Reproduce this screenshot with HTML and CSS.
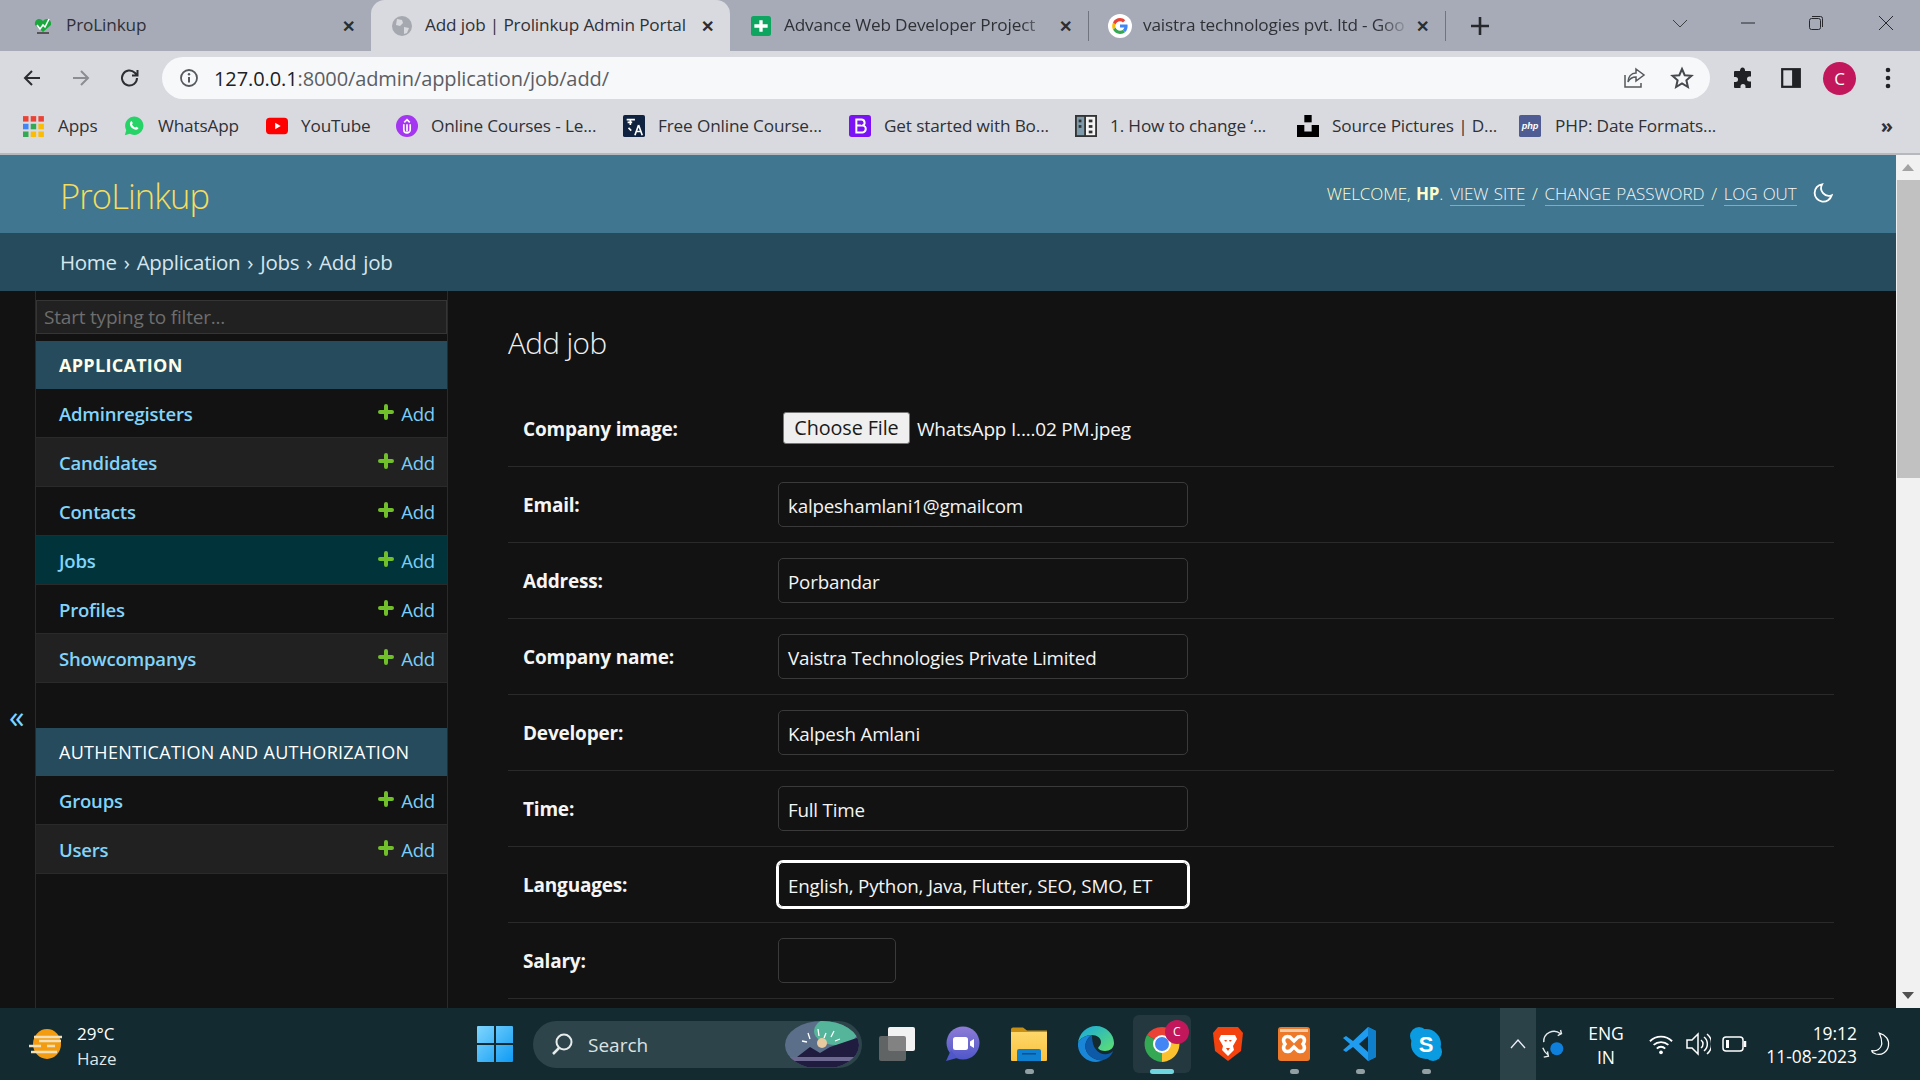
FILE: index.html
```html
<!DOCTYPE html>
<html>
<head>
<meta charset="utf-8">
<title>Add job | Prolinkup Admin Portal</title>
<link rel="stylesheet" href="styles.css">
</head>
<body>

<!-- browser chrome -->
<div class="tabstrip">
	<div class="tab">
		<svg class="fav" viewBox="0 0 20 20"><path d="M2 9 C1 3 7 1 10 5 C13 1 19 3 18 9 L10 16Z" fill="#1aa83c"/><path d="M4 9l3 4 3-4 2 2 4-8" fill="none" stroke="#fff" stroke-width="1.6"/><rect x="4" y="16" width="12" height="2" fill="#555"/></svg>
		<span class="tab-title">ProLinkup</span>
		<span class="tab-x">✕</span>
	</div>
	<div class="tab active">
		<svg class="fav" viewBox="0 0 20 20"><circle cx="10" cy="10" r="10" fill="#a5a8ae"/><path d="M5 3l5 1 1 3-3 3-4-1zM12 11l5 1-2 5-3 1z" fill="#d9dae0"/></svg>
		<span class="tab-title">Add job | Prolinkup Admin Portal</span>
		<span class="tab-x">✕</span>
	</div>
	<div class="tab sep">
		<svg class="fav" viewBox="0 0 24 24"><rect width="24" height="24" rx="3" fill="#0da560"/><path d="M10 5h4v5h6v4h-6v5h-4v-5H4v-4h6z" fill="#fff"/></svg>
		<span class="tab-title fade">Advance Web Developer Project</span>
		<span class="tab-x">✕</span>
	</div>
	<div class="tab sep">
		<svg class="fav g-fav" viewBox="0 0 24 24"><circle cx="12" cy="12" r="12" fill="#fff"/><path d="M19.6 12.2c0-.6 0-1.100-.2-1.600H12v3h4.300c-.2 1-.7 1.800-1.600 2.400l2.500 2c1.500-1.400 2.400-3.400 2.400-5.800z" fill="#4285f4"/><path d="M12 20c2.200 0 4-.7 5.200-2l-2.500-2c-.7.500-1.600.8-2.700.8-2.100 0-3.800-1.400-4.500-3.300L5 15.600C6.300 18.200 9 20 12 20z" fill="#34a853"/><path d="M7.500 13.500c-.3-1-.3-2 0-3L5 8.400c-1.100 2.200-1.100 5 0 7.200z" fill="#fbbc05"/><path d="M12 7.200c1.200 0 2.200.4 3 1.200l2.200-2.200C15.900 4.800 14.100 4 12 4 9 4 6.300 5.800 5 8.400l2.500 2.100C8.200 8.600 9.900 7.200 12 7.200z" fill="#ea4335"/></svg>
		<span class="tab-title fade">vaistra technologies pvt. ltd - Goo</span>
		<span class="tab-x">✕</span>
	</div>
	<svg class="new-tab" viewBox="0 0 20 20"><path d="M10 1v18M1 10h18" stroke="#26282c" stroke-width="2.600"/></svg>
	<div class="win-controls">
		<svg viewBox="0 0 20 20"><path d="M3 7l7 7 7-7" fill="none" stroke="#3c4043" stroke-width="1"/></svg>
		<svg viewBox="0 0 20 20"><path d="M3 10h14" stroke="#26282c" stroke-width="1"/></svg>
		<svg viewBox="0 0 20 20"><rect x="3.500" y="5.500" width="11" height="11" rx="2" fill="none" stroke="#26282c"/><path d="M6 3.500h8.500a2 2 0 0 1 2 2V14" fill="none" stroke="#26282c"/></svg>
		<svg viewBox="0 0 20 20"><path d="M3 3l14 14M17 3L3 17" stroke="#26282c" stroke-width="1"/></svg>
	</div>
</div>

<div class="toolbar">
	<svg class="tool" viewBox="0 0 24 24"><path d="M20 12H5M12 5l-7 7 7 7" fill="none" stroke="#2b2d31" stroke-width="2"/></svg>
	<svg class="tool" viewBox="0 0 24 24"><path d="M4 12h15M12 5l7 7-7 7" fill="none" stroke="#8b8d92" stroke-width="2"/></svg>
	<svg class="tool" viewBox="0 0 24 24"><path d="M19 12a7.500 7.500 0 1 1-2.200-5.300L19.500 9.500M19.500 4v5.500H14" fill="none" stroke="#2b2d31" stroke-width="2"/></svg>
	<div class="omnibox">
		<svg class="omni-info" viewBox="0 0 20 20"><circle cx="10" cy="10" r="8" fill="none" stroke="#55585c" stroke-width="1.800"/><path d="M10 9v5.500" stroke="#55585c" stroke-width="2"/><circle cx="10" cy="6.300" r="1.200" fill="#55585c"/></svg>
		<span class="url"><b>127.0.0.1</b>:8000/admin/application/job/add/</span>
		<svg class="omni-share" viewBox="0 0 24 24"><path d="M3 9v12h16v-4" fill="none" stroke="#55585c" stroke-width="1.500"/><path d="M14 3l8 6-8 6v-4c-4 0-6 1-8 5 0-5 3-9 8-9z" fill="none" stroke="#55585c" stroke-width="1.500"/></svg>
		<svg class="omni-star" viewBox="0 0 24 24"><path d="M12 3l2.700 6.200 6.800.6-5.100 4.500 1.500 6.700L12 17.500 6.100 21l1.500-6.700-5.100-4.500 6.800-.6z" fill="none" stroke="#45484c" stroke-width="2"/></svg>
	</div>
	<svg class="puzzle" viewBox="0 0 24 24"><path d="M10 2a2.500 2.500 0 0 1 4 2v1h5a1 1 0 0 1 1 1v4.500h-1.500a2.500 2.500 0 0 0 0 5H20V21a1 1 0 0 1-1 1h-4.500v-1.500a2.500 2.500 0 0 0-5 0V22H4a1 1 0 0 1-1-1v-5h1.500a2.500 2.500 0 0 0 0-5H3V6a1 1 0 0 1 1-1h5V4z" fill="#202124"/></svg>
	<svg class="panel" viewBox="0 0 20 20"><rect x="1" y="1" width="18" height="18" fill="#202124"/><rect x="3" y="3" width="8" height="14" fill="#d9dae0"/></svg>
	<div class="avatar">C</div>
	<svg class="dots" viewBox="0 0 6 24"><circle cx="3" cy="4" r="2.300" fill="#202124"/><circle cx="3" cy="12" r="2.300" fill="#202124"/><circle cx="3" cy="20" r="2.300" fill="#202124"/></svg>
</div>

<div class="bookmarks">
	<a class="bm" style="width:100px"><svg viewBox="0 0 20 20"><g id="apps"><rect x="0" y="1" width="5" height="5" fill="#ea4335"/><rect x="7" y="1" width="5" height="5" fill="#ea4335"/><rect x="14" y="1" width="5" height="5" fill="#ea4335"/><rect x="0" y="8" width="5" height="5" fill="#4285f4"/><rect x="7" y="8" width="5" height="5" fill="#34a853"/><rect x="14" y="8" width="5" height="5" fill="#fbbc05"/><rect x="0" y="15" width="5" height="5" fill="#34a853"/><rect x="7" y="15" width="5" height="5" fill="#fbbc05"/><rect x="14" y="15" width="5" height="5" fill="#fbbc05"/></g></svg>Apps</a>
	<a class="bm" style="width:143px"><svg viewBox="0 0 24 24"><path d="M2 22l1.500-5.500A10 10 0 1 1 7.500 20.500z" fill="#25d366"/><path d="M8.500 7c1-.8 1.500 0 2 1.500.3.800-.3 1.200-.7 1.700.7 1.500 2 2.800 3.500 3.500.5-.4 1-1 1.700-.7 1.500.6 2.300 1 1.500 2-1 1.500-3 1.500-5.500 0S7.500 11.500 7.500 9.500c0-1.200.4-2 1-2.500z" fill="#fff"/></svg>WhatsApp</a>
	<a class="bm" style="width:130px"><svg viewBox="0 0 24 24"><rect x="0" y="3" width="24" height="18" rx="4" fill="#f00"/><path d="M10 8.500l6 3.500-6 3.500z" fill="#fff"/></svg>YouTube</a>
	<a class="bm" style="width:227px"><svg viewBox="0 0 24 24"><circle cx="12" cy="12" r="12" fill="#a435f0"/><path d="M8.500 10v6a3.500 3.500 0 0 0 7 0v-6M9 8l3-3 3 3M12 10v8" fill="none" stroke="#fff" stroke-width="1.800"/></svg>Online Courses - Le...</a>
	<a class="bm" style="width:226px"><svg viewBox="0 0 24 24"><rect width="24" height="24" rx="2" fill="#0f2240"/><path d="M4 5h9M8 5v6M5 8h5M6 14l3 3M17 11l-4 11M17 11l4 11M14.500 18h5" fill="none" stroke="#fff" stroke-width="1.800"/></svg>Free Online Course...</a>
	<a class="bm" style="width:226px"><svg viewBox="0 0 24 24"><rect width="24" height="24" rx="3" fill="#7a12f5"/><path d="M8 5h5.500a3.400 3.400 0 0 1 1.500 6.500A3.600 3.600 0 0 1 14 19H8zM8 11.500h5" fill="none" stroke="#fff" stroke-width="2.200"/></svg>Get started with Bo...</a>
	<a class="bm" style="width:222px"><svg viewBox="0 0 24 24"><rect x="0" y="0" width="24" height="24" fill="#333"/><rect x="2" y="2" width="8" height="20" fill="#7d9aaa"/><rect x="12" y="2" width="10" height="20" fill="#f4f4f4"/><rect x="4" y="5" width="3" height="3" fill="#333"/><rect x="4" y="11" width="3" height="3" fill="#333"/><rect x="15" y="5" width="4" height="3" fill="#333"/><rect x="15" y="11" width="4" height="3" fill="#333"/><rect x="15" y="17" width="4" height="3" fill="#333"/></svg>1. How to change ‘...</a>
	<a class="bm" style="width:222px"><svg viewBox="0 0 24 24"><rect x="8" y="0" width="8" height="8" fill="#000"/><path d="M0 11h8v7h8v-7h8v13H0z" fill="#000"/></svg>Source Pictures | D...</a>
	<a class="bm"><svg class="php" viewBox="0 0 24 24"><rect width="24" height="24" rx="2" fill="#4f5b93"/><text x="12" y="15" text-anchor="middle" class="php-t">php</text></svg>PHP: Date Formats...</a>
	<span class="bm-more">»</span>
</div>

<!-- admin page -->
<div class="page">
	<div class="page-inner">
		<div class="site-header">
			<div class="brand">ProLinkup</div>
			<div class="tools">
				<span>WELCOME, <b>HP</b>. <a>VIEW SITE</a> / <a>CHANGE PASSWORD</a> / <a>LOG OUT</a></span>
				<svg class="moon" viewBox="0 0 24 24"><path d="M11 2.500a9.500 9.500 0 1 0 10.500 12A8.500 8.500 0 0 1 11 2.500z" fill="none" stroke="#fff" stroke-width="2"/></svg>
			</div>
		</div>
		<div class="crumbs">Home › Application › Jobs › Add job</div>

		<div class="content">
			<div class="toggle-col"><span class="toggle">«</span></div>
			<div class="sidebar">
				<div class="filter">Start typing to filter...</div>
				<div class="caption bold">APPLICATION</div>
				<div class="row"><a>Adminregisters</a><span class="add"><svg viewBox="0 0 16 16"><path d="M8 2v12M2 8h12" stroke="#70bf2b" stroke-width="4" stroke-linecap="round"/></svg>Add</span></div>
				<div class="row alt"><a>Candidates</a><span class="add"><svg viewBox="0 0 16 16"><path d="M8 2v12M2 8h12" stroke="#70bf2b" stroke-width="4" stroke-linecap="round"/></svg>Add</span></div>
				<div class="row"><a>Contacts</a><span class="add"><svg viewBox="0 0 16 16"><path d="M8 2v12M2 8h12" stroke="#70bf2b" stroke-width="4" stroke-linecap="round"/></svg>Add</span></div>
				<div class="row current"><a>Jobs</a><span class="add"><svg viewBox="0 0 16 16"><path d="M8 2v12M2 8h12" stroke="#70bf2b" stroke-width="4" stroke-linecap="round"/></svg>Add</span></div>
				<div class="row"><a>Profiles</a><span class="add"><svg viewBox="0 0 16 16"><path d="M8 2v12M2 8h12" stroke="#70bf2b" stroke-width="4" stroke-linecap="round"/></svg>Add</span></div>
				<div class="row alt"><a>Showcompanys</a><span class="add"><svg viewBox="0 0 16 16"><path d="M8 2v12M2 8h12" stroke="#70bf2b" stroke-width="4" stroke-linecap="round"/></svg>Add</span></div>
				<div class="caption auth">AUTHENTICATION AND AUTHORIZATION</div>
				<div class="row"><a>Groups</a><span class="add"><svg viewBox="0 0 16 16"><path d="M8 2v12M2 8h12" stroke="#70bf2b" stroke-width="4" stroke-linecap="round"/></svg>Add</span></div>
				<div class="row alt"><a>Users</a><span class="add"><svg viewBox="0 0 16 16"><path d="M8 2v12M2 8h12" stroke="#70bf2b" stroke-width="4" stroke-linecap="round"/></svg>Add</span></div>
			</div>
			<div class="main">
				<h1>Add job</h1>
				<div class="form-row file-row">
					<label>Company image:</label>
					<button class="file-btn">Choose File</button>
					<span class="file-name">WhatsApp I....02 PM.jpeg</span>
				</div>
				<div class="form-row"><label>Email:</label><div class="field">kalpeshamlani1@gmailcom</div></div>
				<div class="form-row"><label>Address:</label><div class="field">Porbandar</div></div>
				<div class="form-row"><label>Company name:</label><div class="field">Vaistra Technologies Private Limited</div></div>
				<div class="form-row"><label>Developer:</label><div class="field">Kalpesh Amlani</div></div>
				<div class="form-row"><label>Time:</label><div class="field">Full Time</div></div>
				<div class="form-row"><label>Languages:</label><div class="field focus">English, Python, Java, Flutter, SEO, SMO, ET</div></div>
				<div class="form-row"><label>Salary:</label><div class="field small"></div></div>
			</div>
		</div>
	</div>
	<div class="scrollbar">
		<div class="sb-btn"><span class="sb-up"></span></div>
		<div class="sb-thumb"></div>
		<div class="sb-track"></div>
		<div class="sb-btn"><span class="sb-down"></span></div>
	</div>
</div>

<!-- windows taskbar -->
<div class="taskbar">
	<div class="weather">
		<svg viewBox="0 0 36 32"><ellipse cx="18" cy="16" rx="14" ry="15" fill="#f39c12"/><path d="M5 9h28M10 13h22M0 18h12M18 18h8M2 24h26" stroke="#f0dfb8" stroke-width="2.500"/></svg>
		<div class="weather-text"><div>29°C</div><div class="haze">Haze</div></div>
	</div>
	<svg class="start" viewBox="0 0 36 36"><defs><linearGradient id="w" x1="0" y1="0" x2="1" y2="1"><stop offset="0" stop-color="#7fd6fd"/><stop offset="1" stop-color="#0f9bf5"/></linearGradient></defs><path d="M0 1a1 1 0 0 1 1-1h16v17H0zM19 0h16a1 1 0 0 1 1 1v16H19zM0 19h17v17H1a1 1 0 0 1-1-1zM19 19h17v16a1 1 0 0 1-1 1H19z" fill="url(#w)"/></svg>
	<div class="search">
		<svg class="search-ico" viewBox="0 0 24 24"><circle cx="14" cy="10" r="7.500" fill="none" stroke="#e6ecec" stroke-width="2"/><path d="M9 16l-6 6" stroke="#e6ecec" stroke-width="2.500"/></svg>
		<span>Search</span>
		<svg class="search-art" viewBox="0 0 76 46"><defs><clipPath id="art"><ellipse cx="38" cy="24" rx="37" ry="24"/></clipPath></defs><g clip-path="url(#art)"><rect width="76" height="46" fill="#5c6f8a"/><ellipse cx="52" cy="10" rx="22" ry="14" fill="#54b59a"/><path d="M0 46L26 26l10 6 10-6 30-10v30z" fill="#1f1c3f"/><rect y="36" width="76" height="4" fill="#6d6990"/><path d="M24 12l2 6M34 8l1 7M42 12l-2 5M50 10l-3 6M18 20l5 1M56 18l-5 2" stroke="#fff" stroke-width="1.300"/><circle cx="38" cy="22" r="5" fill="#e8c9a0"/></g></svg>
	</div>
	<div class="apps">
		<div class="app"><svg viewBox="0 0 36 36"><rect x="9" y="1" width="27" height="24" rx="2" fill="#f2f2f2"/><rect x="0" y="10" width="27" height="25" rx="2" fill="#6f6f6f" fill-opacity="0.85"/></svg></div>
		<div class="app"><svg viewBox="0 0 36 36"><defs><linearGradient id="m" x1="0" y1="0" x2="0" y2="1"><stop offset="0" stop-color="#8e7cd6"/><stop offset="1" stop-color="#4f57c9"/></linearGradient></defs><circle cx="18" cy="17" r="16.500" fill="url(#m)"/><path d="M6 24L1 35l11-3z" fill="#4f57c9"/><rect x="8" y="11" width="15" height="13" rx="2.500" fill="#fff"/><path d="M25 15.500l4-2.500v9l-4-2.500z" fill="#fff"/></svg></div>
		<div class="app dot"><svg viewBox="0 0 36 36"><defs><linearGradient id="f" x1="0" y1="0" x2="0" y2="1"><stop offset="0" stop-color="#fdd76a"/><stop offset="1" stop-color="#f9c23c"/></linearGradient></defs><path d="M0 3.500a2 2 0 0 1 2-2h10l4 3h20V12H0z" fill="#c98f13"/><path d="M0 6h36v28a1 1 0 0 1-1 1H1a1 1 0 0 1-1-1z" fill="url(#f)"/><path d="M6 35V25a2 2 0 0 1 2-2h20a2 2 0 0 1 2 2v10z" fill="#0f7fd0"/><rect x="11" y="27" width="14" height="1.500" fill="#0a4f8a"/></svg></div>
		<div class="app"><svg viewBox="0 0 36 36"><defs><linearGradient id="e" x1="0" y1="0" x2="1" y2="1"><stop offset="0" stop-color="#18a8e0"/><stop offset="1" stop-color="#5fe06f"/></linearGradient></defs><path d="M0 17C1 7 9 0 18 0c10 0 18 8 18 17 0 5-4 8-9 8-3 0-6-1-7-3 1-2 3-3 3-6 0-4-4-7-9-7C8 9 2 12 0 17z" fill="url(#e)"/><path d="M0 17c2-5 8-8 14-8-5 3-8 9-6 15 2 6 9 11 17 10-3 1-5 2-7 2C8 36-1 28 0 17z" fill="#1a86d8"/><path d="M14 9c-5 3-8 9-6 15 2 6 9 11 17 10 5-1 9-5 10-9-4 4-9 4-13 2-5-3-8-8-8-18z" fill="#0d5aa8"/></svg></div>
		<div class="app running"><svg viewBox="0 0 36 36"><path d="M18 18L3 9A18 18 0 0 1 33 9z" fill="#ea4335"/><path d="M18 18L33 9A18 18 0 0 1 18 36z" fill="#fbc02d"/><path d="M18 18L18 36A18 18 0 0 1 3 9z" fill="#34a853"/><circle cx="18" cy="18" r="9" fill="#fff"/><circle cx="18" cy="18" r="7" fill="#4285f4"/></svg><span class="badge">C</span></div>
		<div class="app"><svg viewBox="0 0 34 36"><path d="M7 1h20l5 6-2 18-13 10L4 25 2 7z" fill="#f3420d"/><path d="M10 9h14l2 4-4 7 1 4-6 6-6-6 1-4-4-7z" fill="#fff"/><path d="M13 14h3l-1 2zM18 14h3l-2 2zM15 22h4l-2 3z" fill="#f3420d"/></svg></div>
		<div class="app dot"><svg viewBox="0 0 36 36"><rect x="2" y="1" width="32" height="34" rx="3" fill="#ed7a2b"/><rect x="4" y="3" width="28" height="3" fill="#f7c9a4"/><path d="M14 11c-6-2-8 3-5 7-3 4-1 9 5 7l4-4 4 4c6 2 8-3 5-7 3-4 1-9-5-7l-4 4z" fill="none" stroke="#fff" stroke-width="3.500"/></svg></div>
		<div class="app dot"><svg viewBox="0 0 36 36"><path d="M26 1l8 4v26l-8 4L11 21l-7 5-3-2 7-6-7-6 3-2 7 5z" fill="#1f9cf0"/><path d="M26 10v16l-9-8z" fill="#122a30"/><path d="M26 1l8 4v26l-8 4z" fill="#0f7fcb"/></svg></div>
		<div class="app dot"><svg viewBox="0 0 36 36"><circle cx="18" cy="18" r="15" fill="#0a9be0"/><circle cx="11" cy="10" r="9" fill="#0a9be0"/><circle cx="25" cy="26" r="9" fill="#0a9be0"/><text x="18" y="26" text-anchor="middle" class="skype-t">S</text></svg></div>
	</div>
	<div class="tray-up"><svg viewBox="0 0 20 20"><path d="M3 14l7-8 7 8" fill="none" stroke="#eef" stroke-width="1.300"/></svg></div>
	<svg class="sync" viewBox="0 0 30 32"><path d="M4 14A11 11 0 0 1 22 5M19 7l4-2-1-4M3 20c1 3 3 6 6 8M4 30l5-1-1-5" fill="none" stroke="#e6ecec" stroke-width="1.500"/><circle cx="18" cy="21" r="7" fill="#0f7fdc"/></svg>
	<div class="lang">ENG<br>IN</div>
	<svg class="wifi" viewBox="0 0 26 26"><path d="M1 10a17 17 0 0 1 24 0M5 14a12 12 0 0 1 16 0M8.500 18a6 6 0 0 1 9 0" fill="none" stroke="#fff" stroke-width="2"/><circle cx="13" cy="22" r="2" fill="#fff"/></svg>
	<svg class="vol" viewBox="0 0 26 26"><path d="M2 9h5l6-6v20l-6-6H2z" fill="none" stroke="#fff" stroke-width="1.500"/><path d="M16 9a5 5 0 0 1 0 8M19 6a9 9 0 0 1 0 14M22 3a13 13 0 0 1 0 20" fill="none" stroke="#fff" stroke-width="1.500"/></svg>
	<svg class="batt" viewBox="0 0 26 26"><rect x="1" y="6" width="20" height="14" rx="3" fill="none" stroke="#fff" stroke-width="1.500"/><rect x="4" y="9" width="3" height="8" fill="#fff"/><path d="M23 10v6" stroke="#fff" stroke-width="2.500"/></svg>
	<div class="clock"><div>19:12</div><div>11-08-2023</div></div>
	<svg class="focus-moon" viewBox="0 0 24 30"><path d="M10 2c8 2 12 8 11 15s-8 12-15 10c-3-1-5-3-5-4 6 1 11-2 12-8 0-5-1-9-3-13z" fill="none" stroke="#fff" stroke-width="1.500"/></svg>
</div>

</body>
</html>
```

FILE: styles.css
```css
* {
	box-sizing: border-box;
}

html, body {
	height: 100%;
}

body {
	margin: 0;
	display: flex;
	flex-direction: column;
	height: 1080px;
	overflow: hidden;
	font-family: "Open Sans", "Noto Sans", sans-serif;
	background: #121212;
	color: #eee;
}

a {
	text-decoration: none;
}

svg {
	display: block;
	flex: none;
}

/* browser chrome */
.tabstrip {
	height: 51px;
	flex: none;
	display: flex;
	align-items: center;
	padding-left: 12px;
	background: #a7abb7;
}

.tab {
	width: 359px;
	height: 51px;
	flex: none;
	display: flex;
	align-items: center;
	padding: 0 12px 0 21px;
	color: #2f3136;
}

.tab.active {
	background: #d9dae0;
	border-radius: 14px 14px 0 0;
}

.tab.sep {
	border-right: 1px solid #70747e;
	background-clip: padding-box;
}

.tab.sep:nth-child(3) {
	height: 30px;
}

.tab.sep:nth-child(4) {
	width: 357px;
	height: 30px;
}

.fav {
	width: 20px;
	height: 24px;
	margin-right: 13px;
}

.g-fav {
	width: 24px;
	margin-left: -2px;
	margin-right: 11px;
}

.tab-title {
	flex: 1;
	min-width: 0;
	white-space: nowrap;
	margin-top: -2px;
	font-size: 17.200px;
	letter-spacing: -0.15px;
}

.tab-title.fade {
	-webkit-mask-image: linear-gradient(to right, #000 88%, transparent 100%);
	mask-image: linear-gradient(to right, #000 88%, transparent 100%);
}

.tab-x {
	width: 22px;
	flex: none;
	text-align: center;
	font-size: 16px;
	font-weight: 700;
	color: #2b2d31;
}

.new-tab {
	width: 20px;
	height: 20px;
	margin-left: 24px;
}

.win-controls {
	margin-left: auto;
	display: flex;
	gap: 48px;
	padding-right: 24px;
	padding-bottom: 6px;
}

.win-controls svg {
	width: 20px;
	height: 20px;
}

.win-controls svg:last-child {
	margin-left: 2px;
}

.toolbar {
	height: 54px;
	flex: none;
	display: flex;
	align-items: center;
	padding-left: 20px;
	background: #d9dae0;
}

.tool {
	width: 24px;
	height: 24px;
	margin-right: 25px;
}

.omnibox {
	width: 1548px;
	height: 42px;
	margin-left: -5px;
	display: flex;
	align-items: center;
	padding: 0 16px 0 17px;
	background: #f7f8fa;
	border-radius: 21px;
}

.omni-info {
	width: 20px;
	height: 20px;
	margin-right: 15px;
}

.url {
	flex: 1;
	font-size: 20px;
	letter-spacing: -0.1px;
	color: #5b5e63;
}

.url b {
	font-weight: 400;
	color: #202124;
}

.omni-share {
	width: 24px;
	height: 24px;
	margin-right: 24px;
}

.omni-star {
	width: 24px;
	height: 24px;
}

.puzzle {
	width: 24px;
	height: 24px;
	margin-left: 21px;
}

.panel {
	width: 22px;
	height: 22px;
	margin-left: 25px;
}

.avatar {
	width: 33px;
	height: 33px;
	margin-left: 21px;
	border-radius: 50%;
	background: #c2185b;
	color: #fff;
	font-size: 17px;
	line-height: 33px;
	text-align: center;
}

.dots {
	width: 6px;
	height: 24px;
	margin-left: 29px;
}

.bookmarks {
	height: 50px;
	flex: none;
	display: flex;
	align-items: center;
	padding: 0 0 7px 23px;
	background: #d9dae0;
	border-bottom: 2px solid #b7b8be;
	color: #2f3136;
	font-size: 17.200px;
	letter-spacing: -0.15px;
}

.bm {
	flex: none;
	display: flex;
	align-items: center;
	gap: 13px;
	white-space: nowrap;
}

.bm svg {
	width: 22px;
	height: 24px;
}

.php {
	margin-right: 1px;
}

.php-t {
	font: italic 700 10px "Liberation Sans", sans-serif;
	fill: #fff;
}

.bm-more {
	margin-left: auto;
	padding-right: 27px;
	font-size: 20px;
	font-weight: 700;
	line-height: 20px;
}

/* admin page */
.page {
	flex: 1;
	min-height: 0;
	display: flex;
}

.page-inner {
	flex: 1;
	min-width: 0;
	display: flex;
	flex-direction: column;
}

.site-header {
	height: 78px;
	flex: none;
	display: flex;
	align-items: center;
	justify-content: space-between;
	padding: 0 62px 0 60px;
	background: #417690;
}

.brand {
	padding-top: 2px;
	font-size: 34.500px;
	font-weight: 300;
	letter-spacing: -0.9px;
	color: #f5dd5d;
}

.tools {
	display: flex;
	align-items: center;
	padding-bottom: 2px;
	font-size: 17px;
	font-weight: 300;
	letter-spacing: -0.1px;
	word-spacing: 1px;
	color: #ffc;
}

.tools b {
	font-weight: 700;
}

.tools a {
	margin: 0 1.500px;
	color: #f5f5f5;
	border-bottom: 1px solid #79aec8;
}

.moon {
	width: 22px;
	height: 22px;
	margin-left: 14px;
}

.crumbs {
	height: 58px;
	flex: none;
	padding-left: 60px;
	line-height: 59px;
	font-size: 20.500px;
	letter-spacing: -0.3px;
	word-spacing: 2px;
	background: #264b5d;
	color: #d5e6ee;
}

.content {
	flex: 1;
	min-height: 0;
	display: flex;
}

.toggle-col {
	width: 35px;
	flex: none;
	padding: 411px 0 0 9px;
}

.toggle {
	font-size: 31px;
	line-height: 28px;
	color: #81d4fa;
}

.sidebar {
	width: 413px;
	flex: none;
	padding-top: 9px;
	border-left: 1px solid #2a2a2a;
	border-right: 1px solid #2a2a2a;
}

.filter {
	height: 34px;
	margin-bottom: 7px;
	padding-left: 7px;
	line-height: 33px;
	font-size: 19px;
	letter-spacing: -0.2px;
	background: #212121;
	border: 1px solid #353535;
	color: #6e6e6e;
}

.caption {
	height: 48px;
	padding-left: 23px;
	line-height: 49px;
	font-size: 18px;
	background: #264b5d;
	color: #fff;
	letter-spacing: 0.3px;
}

.caption.bold {
	font-weight: 700;
	color: #ffffe8;
}

.caption.auth {
	margin-top: 45px;
}

.row {
	height: 49px;
	display: flex;
	align-items: center;
	justify-content: space-between;
	padding: 0 12px 0 23px;
	border-bottom: 1px solid #2a2a2a;
	font-size: 18.500px;
	letter-spacing: -0.2px;
}

.row a {
	font-weight: 600;
	color: #81d4fa;
}

.row.alt {
	background: #212121;
}

.row.current {
	background: #01343a;
}

.add {
	display: flex;
	align-items: center;
	gap: 7px;
	color: #79cdf7;
}

.add svg {
	width: 16px;
	height: 16px;
	margin-top: -3px;
}

.main {
	flex: 1;
	min-width: 0;
	padding: 30px 62px 0 60px;
}

h1 {
	height: 44px;
	margin: 0 0 26px;
	font-size: 29.700px;
	font-weight: 300;
	line-height: 44px;
	letter-spacing: -0.6px;
	color: #f0f0f0;
}

.form-row {
	height: 76px;
	display: flex;
	align-items: center;
	padding-left: 15px;
	border-bottom: 1px solid #2a2a2a;
	font-size: 18.800px;
	letter-spacing: -0.2px;
	color: #f5f5f5;
}

.form-row label {
	width: 255px;
	flex: none;
	font-size: 19px;
	font-weight: 700;
}

.file-row label {
	width: 260px;
}

.file-btn {
	height: 32px;
	width: 127px;
	margin-top: -2px;
	padding: 0;
	background: #efefef;
	border: 1px solid #767676;
	border-radius: 3px;
	font: inherit;
	font-size: 19.800px;
	letter-spacing: -0.1px;
	color: #1a1a1a;
}

.file-name {
	margin-left: 7px;
	font-size: 19px;
}

.field {
	width: 410px;
	height: 45px;
	padding-left: 9px;
	line-height: 46px;
	border: 1px solid #3a3a3a;
	border-radius: 5px;
	white-space: nowrap;
	overflow: hidden;
}

.field.focus {
	border-color: #fff;
	outline: 1px solid #fff;
	outline-offset: 0;
	box-shadow: 0 0 0 2px #fff;
}

.field.small {
	width: 118px;
}

.scrollbar {
	width: 24px;
	flex: none;
	display: flex;
	flex-direction: column;
	background: #f1f1f1;
}

.sb-btn {
	height: 25px;
	flex: none;
	display: flex;
	align-items: center;
	justify-content: center;
}

.sb-up {
	border: 6px solid transparent;
	border-top: 0;
	border-bottom: 7px solid #a3a3a3;
}

.sb-down {
	border: 6px solid transparent;
	border-bottom: 0;
	border-top: 7px solid #505050;
}

.sb-thumb {
	height: 298px;
	flex: none;
	margin-left: 1px;
	background: #c1c1c1;
}

.sb-track {
	flex: 1;
}

/* windows taskbar */
.taskbar {
	height: 72px;
	flex: none;
	display: flex;
	align-items: center;
	background: #122a30;
	color: #fff;
}

.weather {
	width: 477px;
	flex: none;
	display: flex;
	align-items: center;
	gap: 12px;
	padding-left: 29px;
}

.weather svg {
	width: 36px;
	height: 32px;
}

.weather-text {
	padding-top: 4px;
	font-size: 17px;
	line-height: 25px;
}

.haze {
	color: #dfe6e6;
}

.start {
	width: 36px;
	height: 36px;
}

.search {
	width: 329px;
	height: 47px;
	margin-left: 20px;
	display: flex;
	align-items: center;
	gap: 14px;
	padding-left: 17px;
	background: #2e444b;
	border-radius: 24px;
	font-size: 19px;
	color: #dbe3e3;
}

.search span {
	padding-top: 1px;
}

.search-ico {
	width: 24px;
	height: 24px;
}

.search-art {
	width: 76px;
	height: 46px;
	margin-left: auto;
	margin-right: 2px;
}

.apps {
	display: flex;
	width: 638px;
	padding-left: 2px;
}

.app {
	width: 66.200px;
	height: 72px;
	flex: none;
	position: relative;
	display: flex;
	align-items: center;
	justify-content: center;
}

.app svg {
	width: 36px;
	height: 36px;
}

.app.dot::after {
	content: "";
	position: absolute;
	bottom: 6px;
	left: 50%;
	width: 9px;
	height: 5px;
	margin-left: -4.500px;
	border-radius: 3px;
	background: #93a0a3;
}

.app.running {
	background: #24393f;
	border-radius: 6px;
	height: 58px;
	width: 58px;
	margin: 7px 4px;
}

.app.running::after {
	content: "";
	position: absolute;
	bottom: -1px;
	left: 17px;
	width: 24px;
	height: 5px;
	border-radius: 3px;
	background: #6fd6df;
}

.badge {
	position: absolute;
	top: 5px;
	right: 2px;
	width: 24px;
	height: 24px;
	border-radius: 50%;
	background: #c2185b;
	font-size: 12px;
	line-height: 24px;
	text-align: center;
}

.skype-t {
	font: 700 22px "Liberation Sans", sans-serif;
	fill: #fff;
}

.tray-up {
	width: 36px;
	height: 72px;
	flex: none;
	display: flex;
	align-items: center;
	justify-content: center;
	background: #2b4249;
}

.tray-up svg {
	width: 20px;
	height: 20px;
}

.sync {
	width: 28px;
	height: 32px;
	margin-left: 4px;
}

.lang {
	width: 52px;
	margin-left: 12px;
	padding-top: 2px;
	text-align: center;
	font-size: 17.500px;
	line-height: 24px;
}

.wifi {
	width: 24px;
	height: 24px;
	margin-left: 17px;
}

.vol {
	width: 26px;
	height: 26px;
	margin-left: 12px;
}

.batt {
	width: 26px;
	height: 26px;
	margin-left: 11px;
}

.clock {
	width: 100px;
	margin-left: 9px;
	padding-top: 2px;
	text-align: right;
	font-size: 17.400px;
	line-height: 23px;
}

.focus-moon {
	width: 20px;
	height: 26px;
	margin-left: 14px;
}
```
